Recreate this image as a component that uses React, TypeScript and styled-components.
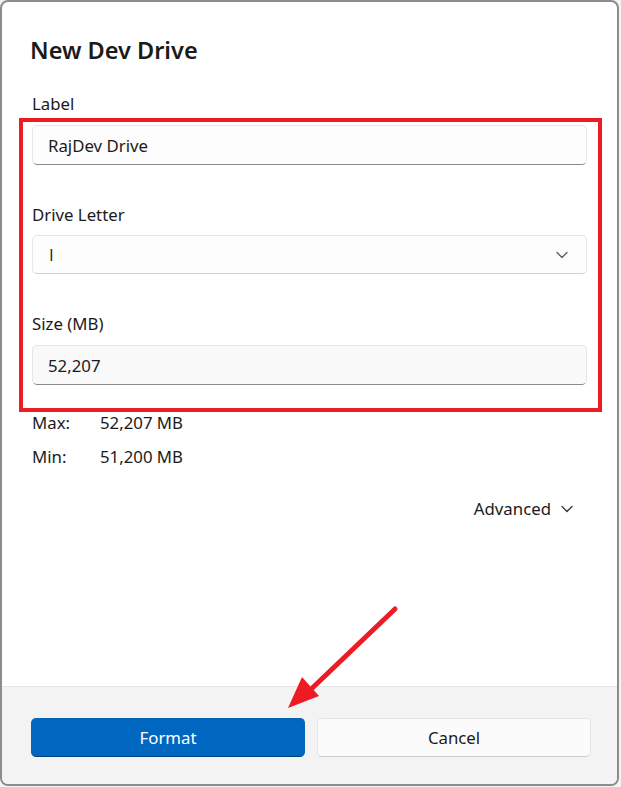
import React from "react";
import styled, { createGlobalStyle } from "styled-components";

const GlobalStyle = createGlobalStyle`
  html, body {
    margin: 0;
    padding: 0;
    background: #f4f4f4;
  }
  body {
    font-family: "Noto Sans", "Open Sans", sans-serif;
    color: #1b1b1b;
  }
`;

const Window = styled.div`
  position: relative;
  box-sizing: border-box;
  width: 619px;
  height: 786px;
  border: 2px solid #8c8c8c;
  border-radius: 8px;
  background: #ffffff;
  display: flex;
  flex-direction: column;
  overflow: hidden;
`;

const Body = styled.div`
  flex: 1;
  display: flex;
  flex-direction: column;
  padding: 32px 30px 0 30px;
`;

const Title = styled.h1`
  margin: 0 0 0 -2px;
  font-size: 23.5px;
  line-height: 32px;
  font-weight: 600;
`;

const FieldLabel = styled.div<{ $gap: number }>`
  margin-top: ${(p) => p.$gap}px;
  font-size: 16.8px;
  line-height: 24px;
`;

const TextBox = styled.div<{ $tint?: boolean }>`
  box-sizing: border-box;
  margin-top: 9px;
  height: 40px;
  display: flex;
  align-items: center;
  padding: 0 15px;
  font-size: 16.8px;
  background: ${(p) => (p.$tint ? "#f9f9f9" : "#fdfdfd")};
  border: 1px solid #e6e6e6;
  border-bottom: 1px solid #8a8a8a;
  border-radius: 5px;
`;

const Dropdown = styled(TextBox)`
  margin-top: 8px;
  height: 39px;
  justify-content: space-between;
  padding: 0 18px 0 16px;
  border-bottom-color: #d2d2d2;
`;

// the drive letter in the reference is a plain bar, without serifs
const DriveLetter = styled.span`
  font-family: "Open Sans", "Noto Sans", sans-serif;
`;

const InfoGrid = styled.div`
  margin-top: 26px;
  display: grid;
  grid-template-columns: 68px auto;
  row-gap: 10px;
  font-size: 16.8px;
  line-height: 24px;
`;

const AdvancedRow = styled.div`
  margin-top: 28px;
  display: flex;
  justify-content: flex-end;
  align-items: center;
  gap: 10px;
  padding-right: 14px;
  font-size: 16.8px;
  line-height: 24px;
`;

const Footer = styled.div`
  box-sizing: border-box;
  height: 98px;
  background: #f3f3f3;
  border-top: 1px solid #e5e5e5;
  display: grid;
  grid-template-columns: 1fr 1fr;
  column-gap: 12px;
  padding: 31px 26px 0 29px;
  align-items: start;
`;

const Button = styled.button<{ $primary?: boolean }>`
  box-sizing: border-box;
  height: 39px;
  border-radius: 5px;
  font-family: "Noto Sans", "Open Sans", sans-serif;
  font-size: 16.8px;
  color: ${(p) => (p.$primary ? "#ffffff" : "#1b1b1b")};
  background: ${(p) => (p.$primary ? "#0067c0" : "#fbfbfb")};
  border: 1px solid ${(p) => (p.$primary ? "#0a64b4" : "#e5e5e5")};
  border-bottom-color: ${(p) => (p.$primary ? "#003f7a" : "#cccccc")};
  padding: 0;
`;

const Highlight = styled.div`
  position: absolute;
  left: 17px;
  top: 116px;
  width: 583px;
  height: 294px;
  box-sizing: border-box;
  border: 4px solid #ed1c24;
  pointer-events: none;
`;

const ArrowLayer = styled.svg`
  position: absolute;
  left: 0;
  top: 0;
  pointer-events: none;
`;

function Chevron({ color }: { color: string }) {
  return (
    <svg width="12" height="8" viewBox="0 0 12 8">
      <polyline
        points="1,1.5 6,6.5 11,1.5"
        fill="none"
        stroke={color}
        strokeWidth="1.3"
        strokeLinejoin="round"
        strokeLinecap="round"
      />
    </svg>
  );
}

export default function App() {
  return (
    <>
      <GlobalStyle />
      <Window>
        <Body>
          <Title>New Dev Drive</Title>
          <FieldLabel $gap={26}>Label</FieldLabel>
          <TextBox>RajDev Drive</TextBox>
          <FieldLabel $gap={38}>Drive Letter</FieldLabel>
          <Dropdown>
            <DriveLetter>I</DriveLetter>
            <Chevron color="#5a5a5a" />
          </Dropdown>
          <FieldLabel $gap={38}>Size (MB)</FieldLabel>
          <TextBox $tint>52,207</TextBox>
          <InfoGrid>
            <span>Max:</span>
            <span>52,207 MB</span>
            <span>Min:</span>
            <span>51,200 MB</span>
          </InfoGrid>
          <AdvancedRow>
            <span>Advanced</span>
            <Chevron color="#333333" />
          </AdvancedRow>
        </Body>
        <Footer>
          <Button $primary>Format</Button>
          <Button>Cancel</Button>
        </Footer>
        <Highlight />
        <ArrowLayer width="615" height="782" viewBox="2 2 615 782">
          <line x1="395" y1="609" x2="305" y2="695" stroke="#ed1c24" strokeWidth="5" strokeLinecap="round" />
          <polygon points="288,708 302,677 319,696" fill="#ed1c24" />
        </ArrowLayer>
      </Window>
    </>
  );
}
